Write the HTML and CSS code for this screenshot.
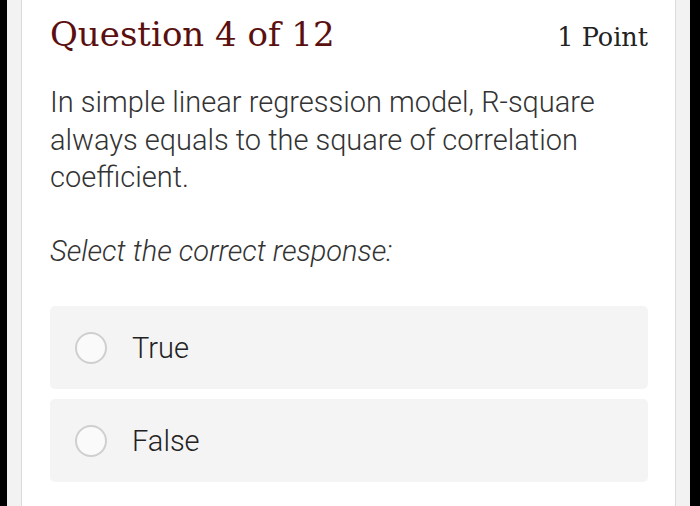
FILE: index.html
```html
<!DOCTYPE html>
<html>
<head>
<meta charset="utf-8">
<link rel="stylesheet" href="styles.css">
</head>
<body>
<div class="frame">
  <div class="edge edge-left"></div>
  <div class="gutter gutter-left"></div>
  <main class="quiz">
    <header class="quiz-head">
      <h1 class="quiz-title">Question 4 of 12</h1>
      <span class="quiz-points">1 Point</span>
    </header>
    <p class="quiz-question">In simple linear regression model, R-square always equals to the square of correlation coefficient.</p>
    <p class="quiz-prompt">Select the correct response:</p>
    <div class="options">
      <label class="option"><span class="radio"></span><span class="option-text">True</span></label>
      <label class="option"><span class="radio"></span><span class="option-text">False</span></label>
    </div>
  </main>
  <div class="gutter gutter-right"></div>
  <div class="edge edge-right"></div>
</div>
</body>
</html>
```
FILE: styles.css
```css
html, body {
  margin: 0;
  padding: 0;
  height: 100%;
  background: #fff;
}
.frame {
  display: flex;
  height: 506px;
  overflow: hidden;
}
.edge {
  background: #000;
  flex: none;
}
.edge-left { width: 7px; }
.edge-right { width: 10px; }
.gutter {
  background: #f2f2f2;
  flex: none;
  width: 14px;
}
.gutter-left { border-right: 1px solid #dcdcdc; }
.gutter-right { border-left: 1px solid #dcdcdc; }
.quiz {
  flex: 1;
  padding: 0 27px 0 28px;
  font-family: Roboto, "Liberation Sans", sans-serif;
  color: #333;
}
.quiz-head {
  display: flex;
  justify-content: space-between;
  align-items: baseline;
  margin-top: 12px;
}
.quiz-title {
  margin: 0;
  font-family: "DejaVu Serif", serif;
  font-weight: normal;
  font-size: 34px;
  line-height: 44px;
  color: #5b1010;
}
.quiz-points {
  font-family: "DejaVu Serif", serif;
  font-size: 25.5px;
  color: #222;
}
.quiz-question {
  margin: 28px 0 0;
  font-size: 29px;
  font-weight: 300;
  line-height: 37.5px;
}
.quiz-prompt {
  margin: 36px 0 0;
  font-size: 29px;
  font-weight: 300;
  font-style: italic;
  line-height: 37.5px;
}
.options {
  display: flex;
  flex-direction: column;
  gap: 10px;
  margin-top: 36px;
}
.option {
  display: flex;
  align-items: center;
  height: 83px;
  background: #f4f4f4;
  border-radius: 5px;
  padding-left: 25px;
}
.radio {
  width: 28px;
  height: 28px;
  border: 2px solid #cfcfcf;
  border-radius: 50%;
  background: #fafafa;
  flex: none;
}
.option-text {
  margin-left: 25px;
  font-size: 29px;
  font-weight: 300;
  color: #222;
}
```
